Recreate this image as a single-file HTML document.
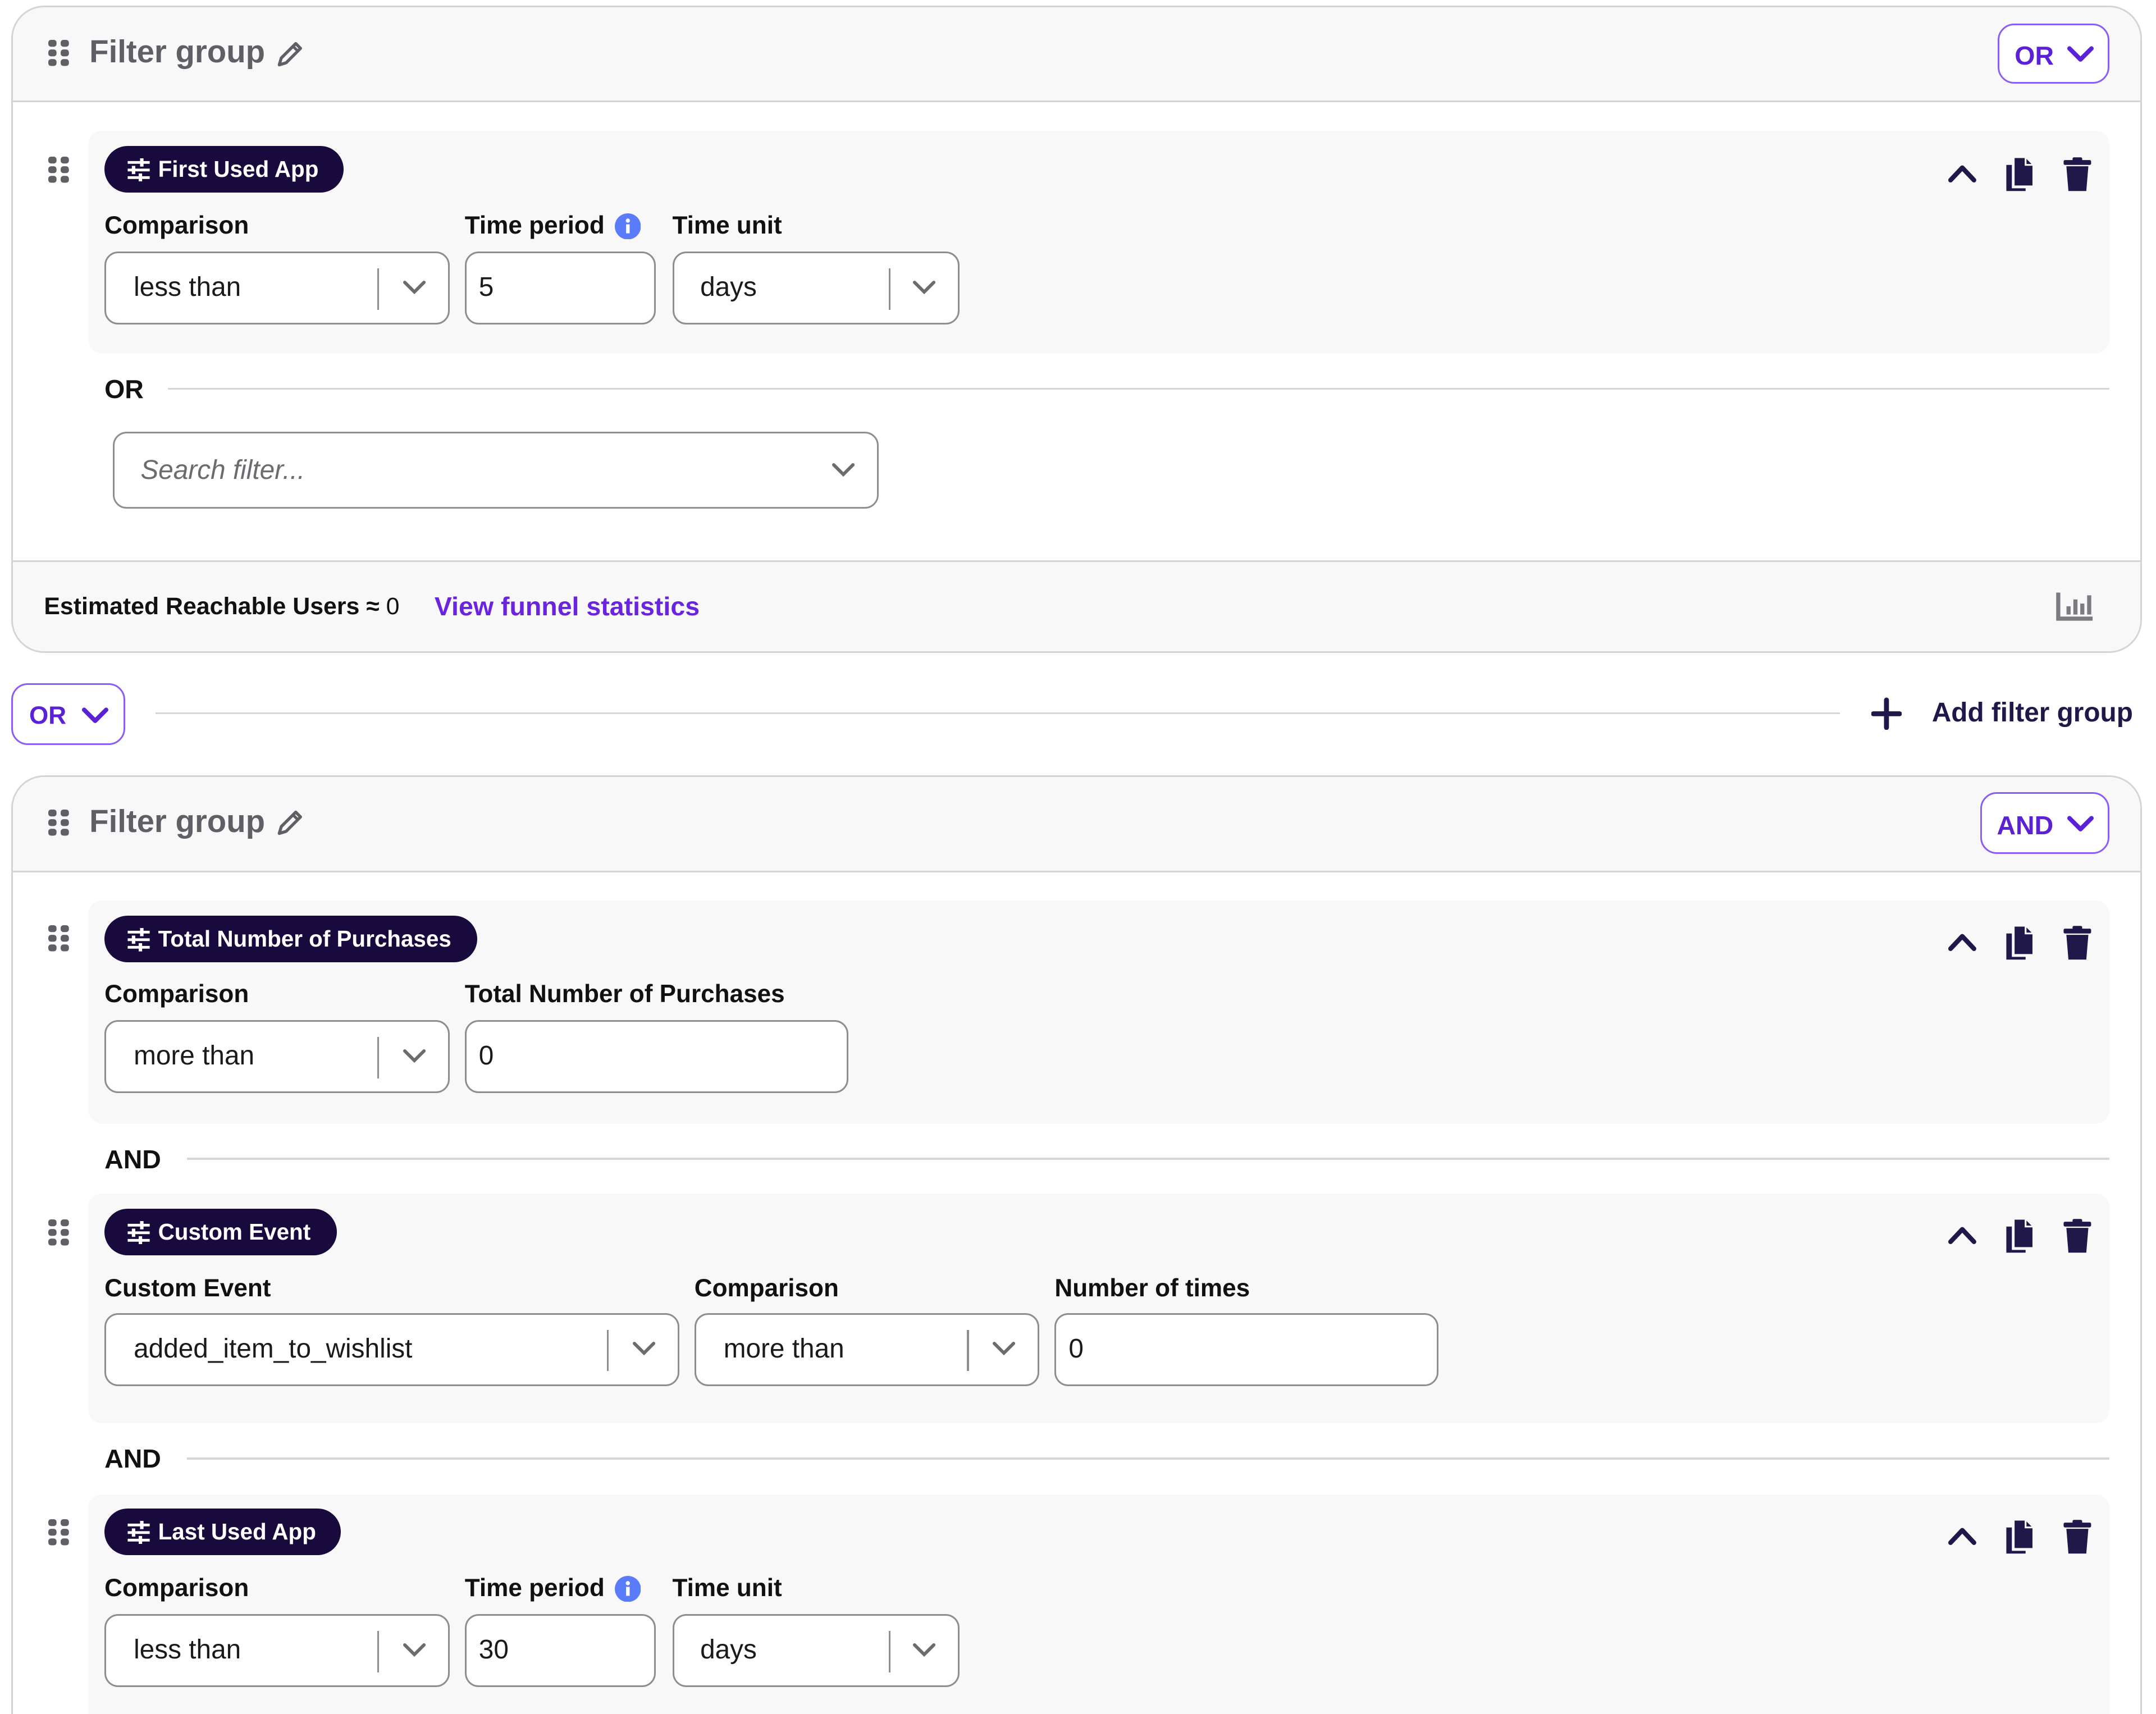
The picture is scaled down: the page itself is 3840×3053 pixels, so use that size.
<!DOCTYPE html>
<html><head><meta charset="utf-8"><style>
html,body{margin:0;padding:0;background:#fff;overflow:hidden}
body{width:3840px;height:3053px}
#w{zoom:2.44898;position:relative;width:1568px;height:1247px;font-family:"Liberation Sans",sans-serif;color:#111}
.a{position:absolute}
.card{position:absolute;border:1.5px solid #d4d4d4;border-radius:24px;background:#fff;overflow:hidden;box-sizing:border-box}
.hdr{position:absolute;left:0;right:0;top:0;height:68px;background:#f8f8f8;border-bottom:1.5px solid #d4d4d4}
.ft{font-size:23px;font-weight:bold;color:#5f5f66}
.blk{position:absolute;background:#f8f8f8;border-radius:10px}
.pill{position:absolute;height:34px;border-radius:17px;background:#180a3c;color:#fff;font-weight:bold;font-size:16.5px;line-height:34px;padding-left:39px;box-sizing:border-box}
.pill svg{position:absolute;left:16px;top:9px}
.lbl{position:absolute;font-size:18px;font-weight:bold;color:#111}
.inp{position:absolute;height:53px;border:1.5px solid #8d8d93;border-radius:10px;background:#fff;box-sizing:border-box;font-size:19.5px;line-height:50px;color:#1a1a1a}
.sep{position:absolute;top:11px;width:1.5px;height:30px;background:#8d8d93}
.chev{position:absolute;top:19px}
.btn{position:absolute;border:1.5px solid #8b5cf6;border-radius:12px;background:#fff;color:#5b21d6;font-weight:bold;font-size:19px;box-sizing:border-box}
.conj{position:absolute;font-size:19px;font-weight:bold;color:#111}
.line{position:absolute;height:1.5px;background:#d6d6d6}
</style></head><body><div id="w">

<!-- templates as inline svg -->
<!-- GROUP 1 -->
<div class="card" style="left:8px;top:4px;width:1550px;height:471px">
  <div class="hdr"></div>
  <div class="a" style="left:0;right:0;bottom:0;height:65px;background:#f8f8f8;border-top:1.5px solid #d4d4d4"></div>
</div>
<svg class="a" style="left:35px;top:29px" width="16" height="20" viewBox="0 0 16 20"><g fill="#5f5f66"><rect x="0" y="0" width="6" height="5" rx="2"/><rect x="9" y="0" width="6" height="5" rx="2"/><rect x="0" y="7" width="6" height="5" rx="2"/><rect x="9" y="7" width="6" height="5" rx="2"/><rect x="0" y="14" width="6" height="5" rx="2"/><rect x="9" y="14" width="6" height="5" rx="2"/></g></svg>
<div class="a ft" style="left:65px;top:24px">Filter group</div>
<svg class="a" style="left:200px;top:28px" width="22" height="22" viewBox="0 0 22 22"><path d="M3 19 L4.5 14 L15 3.5 L18.5 7 L8 17.5 Z" fill="none" stroke="#5f5f66" stroke-width="2.2" stroke-linejoin="round"/><path d="M13 5.5 L16.5 9" stroke="#5f5f66" stroke-width="2"/></svg>
<div class="btn" style="left:1453px;top:17px;width:81px;height:44px"><span class="a" style="left:11px;top:11px">OR</span><svg class="a" style="left:49px;top:14px" width="20" height="14" viewBox="0 0 20 14"><path d="M2 3 L10 11 L18 3" fill="none" stroke="#5b21d6" stroke-width="3.2" stroke-linecap="round" stroke-linejoin="round"/></svg></div>

<div class="blk" style="left:64px;top:95px;width:1470px;height:162px"></div>
<svg class="a" style="left:35px;top:114px" width="16" height="20" viewBox="0 0 16 20"><g fill="#5f5f66"><rect x="0" y="0" width="6" height="5" rx="2"/><rect x="9" y="0" width="6" height="5" rx="2"/><rect x="0" y="7" width="6" height="5" rx="2"/><rect x="9" y="7" width="6" height="5" rx="2"/><rect x="0" y="14" width="6" height="5" rx="2"/><rect x="9" y="14" width="6" height="5" rx="2"/></g></svg>
<div class="pill" style="left:76px;top:106px;width:174px"><svg width="18" height="17" viewBox="0 0 18 17"><g stroke="#fff" stroke-width="2"><path d="M1 3H17M1 8.5H17M1 14H17"/></g><g fill="#fff"><rect x="10" y="0" width="2.5" height="6"/><rect x="4" y="5.5" width="2.5" height="6"/><rect x="9" y="11" width="2.5" height="6"/></g></svg>First Used App</div>
<div class="lbl" style="left:76px;top:154px">Comparison</div>
<div class="lbl" style="left:338px;top:154px">Time period</div>
<svg class="a" style="left:447px;top:155px" width="19" height="19" viewBox="0 0 19 19"><circle cx="9.5" cy="9.5" r="9.5" fill="#5b7cfa"/><rect x="8.2" y="8" width="2.6" height="6.5" fill="#fff"/><circle cx="9.5" cy="5.3" r="1.5" fill="#fff"/></svg>
<div class="lbl" style="left:489px;top:154px">Time unit</div>
<div class="inp" style="left:76px;top:183px;width:251px"><span class="a" style="left:20px">less than</span><div class="sep" style="left:197px"></div><svg class="chev" style="left:215px" width="18" height="12" viewBox="0 0 18 12"><path d="M2 2 L9 9 L16 2" fill="none" stroke="#6b6b70" stroke-width="2.4" stroke-linecap="round"/></svg></div>
<div class="inp" style="left:338px;top:183px;width:139px"><span class="a" style="left:9px">5</span></div>
<div class="inp" style="left:489px;top:183px;width:209px"><span class="a" style="left:19px">days</span><div class="sep" style="left:156px"></div><svg class="chev" style="left:173px" width="18" height="12" viewBox="0 0 18 12"><path d="M2 2 L9 9 L16 2" fill="none" stroke="#6b6b70" stroke-width="2.4" stroke-linecap="round"/></svg></div>
<!-- right icons -->
<svg class="a" style="left:1416px;top:118px" width="22" height="16" viewBox="0 0 22 16"><path d="M2.5 13 L11 4 L19.5 13" fill="none" stroke="#21184a" stroke-width="3.4" stroke-linecap="round" stroke-linejoin="round"/></svg>
<svg class="a" style="left:1458px;top:114px" width="22" height="26" viewBox="0 0 22 26"><path d="M7 1 H15 L20 6 V21 H7 Z" fill="#21184a"/><path d="M15 1 V6 H20" fill="none" stroke="#f8f8f8" stroke-width="1.3"/><path d="M5 6 H1 V25 H15 V23 H5 Z" fill="#21184a"/></svg>
<svg class="a" style="left:1500px;top:114px" width="22" height="26" viewBox="0 0 22 26"><rect x="1" y="2.5" width="20" height="3.5" rx="1" fill="#21184a"/><rect x="7.5" y="0.5" width="7" height="3" rx="1" fill="#21184a"/><path d="M3 7 H19 L17.5 25 H4.5 Z" fill="#21184a"/></svg>

<div class="conj" style="left:76px;top:272px">OR</div>
<div class="line" style="left:122px;top:282px;width:1412px"></div>
<div class="inp" style="left:82px;top:314px;width:557px;height:56px;line-height:54px"><span class="a" style="left:19px;font-style:italic;color:#6b6b70">Search filter...</span><svg class="chev" style="left:521px;top:21px" width="18" height="12" viewBox="0 0 18 12"><path d="M2 2 L9 9 L16 2" fill="none" stroke="#6b6b70" stroke-width="2.4" stroke-linecap="round"/></svg></div>

<div class="a" style="left:32px;top:431px;font-size:17.5px;font-weight:bold">Estimated Reachable Users ≈ <span style="font-weight:normal">0</span></div>
<div class="a" style="left:316px;top:430px;font-size:19px;font-weight:bold;color:#6a24e0">View funnel statistics</div>
<svg class="a" style="left:1495px;top:430px" width="28" height="22" viewBox="0 0 28 22"><path d="M2 1 V20 H27" fill="none" stroke="#7b7b82" stroke-width="3"/><g fill="#7b7b82"><rect x="8" y="11" width="3" height="6"/><rect x="13" y="6" width="3" height="11"/><rect x="18" y="9" width="3" height="8"/><rect x="23" y="3" width="3" height="14"/></g></svg>

<!-- middle row -->
<div class="btn" style="left:8px;top:497px;width:83px;height:45px"><span class="a" style="left:12px;top:12px;font-size:18px">OR</span><svg class="a" style="left:50px;top:15px" width="20" height="14" viewBox="0 0 20 14"><path d="M2 3 L10 11 L18 3" fill="none" stroke="#5b21d6" stroke-width="3.2" stroke-linecap="round" stroke-linejoin="round"/></svg></div>
<div class="line" style="left:113px;top:518px;width:1225px"></div>
<svg class="a" style="left:1361px;top:507px" width="22" height="24" viewBox="0 0 22 24"><path d="M11 2 V22 M1.5 12 H20.5" stroke="#21184a" stroke-width="3.6" stroke-linecap="round"/></svg>
<div class="a" style="left:1405px;top:507px;font-size:19.5px;font-weight:bold;color:#21184a">Add filter group</div>

<!-- GROUP 2 -->
<div class="card" style="left:8px;top:564px;width:1550px;height:720px"><div class="hdr"></div></div>
<svg class="a" style="left:35px;top:589px" width="16" height="20" viewBox="0 0 16 20"><g fill="#5f5f66"><rect x="0" y="0" width="6" height="5" rx="2"/><rect x="9" y="0" width="6" height="5" rx="2"/><rect x="0" y="7" width="6" height="5" rx="2"/><rect x="9" y="7" width="6" height="5" rx="2"/><rect x="0" y="14" width="6" height="5" rx="2"/><rect x="9" y="14" width="6" height="5" rx="2"/></g></svg>
<div class="a ft" style="left:65px;top:584px">Filter group</div>
<svg class="a" style="left:200px;top:587px" width="22" height="22" viewBox="0 0 22 22"><path d="M3 19 L4.5 14 L15 3.5 L18.5 7 L8 17.5 Z" fill="none" stroke="#5f5f66" stroke-width="2.2" stroke-linejoin="round"/><path d="M13 5.5 L16.5 9" stroke="#5f5f66" stroke-width="2"/></svg>
<div class="btn" style="left:1440px;top:576px;width:94px;height:45px"><span class="a" style="left:11px;top:12px">AND</span><svg class="a" style="left:62px;top:15px" width="20" height="14" viewBox="0 0 20 14"><path d="M2 3 L10 11 L18 3" fill="none" stroke="#5b21d6" stroke-width="3.2" stroke-linecap="round" stroke-linejoin="round"/></svg></div>

<!-- block 1 -->
<div class="blk" style="left:64px;top:655px;width:1470px;height:162px"></div>
<svg class="a" style="left:35px;top:673px" width="16" height="20" viewBox="0 0 16 20"><g fill="#5f5f66"><rect x="0" y="0" width="6" height="5" rx="2"/><rect x="9" y="0" width="6" height="5" rx="2"/><rect x="0" y="7" width="6" height="5" rx="2"/><rect x="9" y="7" width="6" height="5" rx="2"/><rect x="0" y="14" width="6" height="5" rx="2"/><rect x="9" y="14" width="6" height="5" rx="2"/></g></svg>
<div class="pill" style="left:76px;top:666px;width:271px"><svg width="18" height="17" viewBox="0 0 18 17"><g stroke="#fff" stroke-width="2"><path d="M1 3H17M1 8.5H17M1 14H17"/></g><g fill="#fff"><rect x="10" y="0" width="2.5" height="6"/><rect x="4" y="5.5" width="2.5" height="6"/><rect x="9" y="11" width="2.5" height="6"/></g></svg>Total Number of Purchases</div>
<div class="lbl" style="left:76px;top:713px">Comparison</div>
<div class="lbl" style="left:338px;top:713px">Total Number of Purchases</div>
<div class="inp" style="left:76px;top:742px;width:251px"><span class="a" style="left:20px">more than</span><div class="sep" style="left:197px"></div><svg class="chev" style="left:215px" width="18" height="12" viewBox="0 0 18 12"><path d="M2 2 L9 9 L16 2" fill="none" stroke="#6b6b70" stroke-width="2.4" stroke-linecap="round"/></svg></div>
<div class="inp" style="left:338px;top:742px;width:279px"><span class="a" style="left:9px">0</span></div>
<svg class="a" style="left:1416px;top:677px" width="22" height="16" viewBox="0 0 22 16"><path d="M2.5 13 L11 4 L19.5 13" fill="none" stroke="#21184a" stroke-width="3.4" stroke-linecap="round" stroke-linejoin="round"/></svg>
<svg class="a" style="left:1458px;top:673px" width="22" height="26" viewBox="0 0 22 26"><path d="M7 1 H15 L20 6 V21 H7 Z" fill="#21184a"/><path d="M15 1 V6 H20" fill="none" stroke="#f8f8f8" stroke-width="1.3"/><path d="M5 6 H1 V25 H15 V23 H5 Z" fill="#21184a"/></svg>
<svg class="a" style="left:1500px;top:673px" width="22" height="26" viewBox="0 0 22 26"><rect x="1" y="2.5" width="20" height="3.5" rx="1" fill="#21184a"/><rect x="7.5" y="0.5" width="7" height="3" rx="1" fill="#21184a"/><path d="M3 7 H19 L17.5 25 H4.5 Z" fill="#21184a"/></svg>

<div class="conj" style="left:76px;top:832px">AND</div>
<div class="line" style="left:136px;top:842px;width:1398px"></div>

<!-- block 2 -->
<div class="blk" style="left:64px;top:868px;width:1470px;height:167px"></div>
<svg class="a" style="left:35px;top:887px" width="16" height="20" viewBox="0 0 16 20"><g fill="#5f5f66"><rect x="0" y="0" width="6" height="5" rx="2"/><rect x="9" y="0" width="6" height="5" rx="2"/><rect x="0" y="7" width="6" height="5" rx="2"/><rect x="9" y="7" width="6" height="5" rx="2"/><rect x="0" y="14" width="6" height="5" rx="2"/><rect x="9" y="14" width="6" height="5" rx="2"/></g></svg>
<div class="pill" style="left:76px;top:879px;width:169px"><svg width="18" height="17" viewBox="0 0 18 17"><g stroke="#fff" stroke-width="2"><path d="M1 3H17M1 8.5H17M1 14H17"/></g><g fill="#fff"><rect x="10" y="0" width="2.5" height="6"/><rect x="4" y="5.5" width="2.5" height="6"/><rect x="9" y="11" width="2.5" height="6"/></g></svg>Custom Event</div>
<div class="lbl" style="left:76px;top:927px">Custom Event</div>
<div class="lbl" style="left:505px;top:927px">Comparison</div>
<div class="lbl" style="left:767px;top:927px">Number of times</div>
<div class="inp" style="left:76px;top:955px;width:418px"><span class="a" style="left:20px">added_item_to_wishlist</span><div class="sep" style="left:364px"></div><svg class="chev" style="left:382px" width="18" height="12" viewBox="0 0 18 12"><path d="M2 2 L9 9 L16 2" fill="none" stroke="#6b6b70" stroke-width="2.4" stroke-linecap="round"/></svg></div>
<div class="inp" style="left:505px;top:955px;width:251px"><span class="a" style="left:20px">more than</span><div class="sep" style="left:197px"></div><svg class="chev" style="left:215px" width="18" height="12" viewBox="0 0 18 12"><path d="M2 2 L9 9 L16 2" fill="none" stroke="#6b6b70" stroke-width="2.4" stroke-linecap="round"/></svg></div>
<div class="inp" style="left:767px;top:955px;width:279px"><span class="a" style="left:9px">0</span></div>
<svg class="a" style="left:1416px;top:890px" width="22" height="16" viewBox="0 0 22 16"><path d="M2.5 13 L11 4 L19.5 13" fill="none" stroke="#21184a" stroke-width="3.4" stroke-linecap="round" stroke-linejoin="round"/></svg>
<svg class="a" style="left:1458px;top:886px" width="22" height="26" viewBox="0 0 22 26"><path d="M7 1 H15 L20 6 V21 H7 Z" fill="#21184a"/><path d="M15 1 V6 H20" fill="none" stroke="#f8f8f8" stroke-width="1.3"/><path d="M5 6 H1 V25 H15 V23 H5 Z" fill="#21184a"/></svg>
<svg class="a" style="left:1500px;top:886px" width="22" height="26" viewBox="0 0 22 26"><rect x="1" y="2.5" width="20" height="3.5" rx="1" fill="#21184a"/><rect x="7.5" y="0.5" width="7" height="3" rx="1" fill="#21184a"/><path d="M3 7 H19 L17.5 25 H4.5 Z" fill="#21184a"/></svg>

<div class="conj" style="left:76px;top:1050px">AND</div>
<div class="line" style="left:136px;top:1060px;width:1398px"></div>

<!-- block 3 -->
<div class="blk" style="left:64px;top:1087px;width:1470px;height:200px"></div>
<svg class="a" style="left:35px;top:1105px" width="16" height="20" viewBox="0 0 16 20"><g fill="#5f5f66"><rect x="0" y="0" width="6" height="5" rx="2"/><rect x="9" y="0" width="6" height="5" rx="2"/><rect x="0" y="7" width="6" height="5" rx="2"/><rect x="9" y="7" width="6" height="5" rx="2"/><rect x="0" y="14" width="6" height="5" rx="2"/><rect x="9" y="14" width="6" height="5" rx="2"/></g></svg>
<div class="pill" style="left:76px;top:1097px;width:172px"><svg width="18" height="17" viewBox="0 0 18 17"><g stroke="#fff" stroke-width="2"><path d="M1 3H17M1 8.5H17M1 14H17"/></g><g fill="#fff"><rect x="10" y="0" width="2.5" height="6"/><rect x="4" y="5.5" width="2.5" height="6"/><rect x="9" y="11" width="2.5" height="6"/></g></svg>Last Used App</div>
<div class="lbl" style="left:76px;top:1145px">Comparison</div>
<div class="lbl" style="left:338px;top:1145px">Time period</div>
<svg class="a" style="left:447px;top:1146px" width="19" height="19" viewBox="0 0 19 19"><circle cx="9.5" cy="9.5" r="9.5" fill="#5b7cfa"/><rect x="8.2" y="8" width="2.6" height="6.5" fill="#fff"/><circle cx="9.5" cy="5.3" r="1.5" fill="#fff"/></svg>
<div class="lbl" style="left:489px;top:1145px">Time unit</div>
<div class="inp" style="left:76px;top:1174px;width:251px"><span class="a" style="left:20px">less than</span><div class="sep" style="left:197px"></div><svg class="chev" style="left:215px" width="18" height="12" viewBox="0 0 18 12"><path d="M2 2 L9 9 L16 2" fill="none" stroke="#6b6b70" stroke-width="2.4" stroke-linecap="round"/></svg></div>
<div class="inp" style="left:338px;top:1174px;width:139px"><span class="a" style="left:9px">30</span></div>
<div class="inp" style="left:489px;top:1174px;width:209px"><span class="a" style="left:19px">days</span><div class="sep" style="left:156px"></div><svg class="chev" style="left:173px" width="18" height="12" viewBox="0 0 18 12"><path d="M2 2 L9 9 L16 2" fill="none" stroke="#6b6b70" stroke-width="2.4" stroke-linecap="round"/></svg></div>
<svg class="a" style="left:1416px;top:1109px" width="22" height="16" viewBox="0 0 22 16"><path d="M2.5 13 L11 4 L19.5 13" fill="none" stroke="#21184a" stroke-width="3.4" stroke-linecap="round" stroke-linejoin="round"/></svg>
<svg class="a" style="left:1458px;top:1105px" width="22" height="26" viewBox="0 0 22 26"><path d="M7 1 H15 L20 6 V21 H7 Z" fill="#21184a"/><path d="M15 1 V6 H20" fill="none" stroke="#f8f8f8" stroke-width="1.3"/><path d="M5 6 H1 V25 H15 V23 H5 Z" fill="#21184a"/></svg>
<svg class="a" style="left:1500px;top:1105px" width="22" height="26" viewBox="0 0 22 26"><rect x="1" y="2.5" width="20" height="3.5" rx="1" fill="#21184a"/><rect x="7.5" y="0.5" width="7" height="3" rx="1" fill="#21184a"/><path d="M3 7 H19 L17.5 25 H4.5 Z" fill="#21184a"/></svg>

</div></body></html>
